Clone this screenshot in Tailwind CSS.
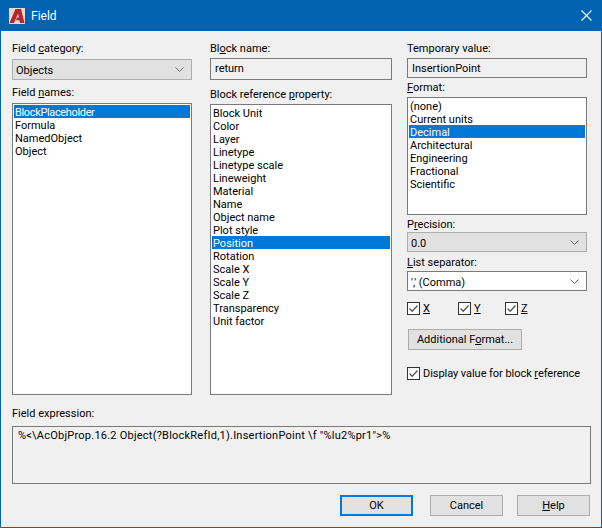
<!DOCTYPE html>
<html lang="en">
<head>
    <meta charset="UTF-8">
    <title>Field</title>
    <script src="https://cdn.jsdelivr.net/npm/@tailwindcss/browser@4"></script>
</head>
<body class="w-[602px] h-[528px] overflow-hidden bg-[#f0f0f0] font-['Roboto',sans-serif] text-[11px] leading-[13px] text-black">
<div class="w-[602px] h-[528px] flex flex-col border border-[#0063b1] border-t-0">

    <!-- title bar -->
    <div class="h-[31px] -mx-px bg-[#0063b1] flex items-center text-white shrink-0">
        <svg class="ml-[9px] w-[16px] h-[16px]" viewBox="0 0 16 16">
            <rect width="16" height="16" fill="#ecd6d2"/>
            <path d="M0.5 15 L6.5 1 H12 L15.5 15 H11 L10.4 12.2 H7 L8 9.6 H9.9 L9.1 5.5 L5 15 Z" fill="#b3262b"/>
        </svg>
        <span class="ml-[6px] mt-[2px] text-[12px]">Field</span>
        <svg class="ml-auto mr-[10px] w-[11px] h-[11px]" viewBox="0 0 11 11">
            <path d="M0.5 0.5 L10.5 10.5 M10.5 0.5 L0.5 10.5" stroke="#fff" stroke-width="1.1" fill="none"/>
        </svg>
    </div>

    <div class="flex pl-[11px] pt-[11px] h-[364px] shrink-0 whitespace-nowrap">

        <!-- left column -->
        <div class="w-[180px] flex flex-col">
            <div class="h-[13px]">Field <u>c</u>ategory:</div>
            <div class="mt-[4px] h-[21px] border border-[#adadad] bg-[#e1e1e1] flex items-center justify-between pl-[3px] pr-[7px]">
                <span class="mt-[2px]">Objects</span>
                <svg class="w-[9px] h-[5px]" viewBox="0 0 9 5"><path d="M0.5 0.5 L4.5 4.5 L8.5 0.5" stroke="#666" fill="none"/></svg>
            </div>
            <div class="mt-[6px] h-[13px]">Field <u>n</u>ames:</div>
            <div class="mt-[4px] h-[294px] border border-[#7a7a7a] bg-white p-[1px] leading-[15px]">
                <div class="h-[13px] bg-[#0078d7] text-white pl-[1px] tracking-[-0.35px]">BlockPlaceholder</div>
                <div class="h-[13px] pl-[1px]">Formula</div>
                <div class="h-[13px] pl-[1px]">NamedObject</div>
                <div class="h-[13px] pl-[1px]">Object</div>
            </div>
        </div>

        <!-- middle column -->
        <div class="ml-[18px] w-[182px] flex flex-col">
            <div class="h-[13px]">Bl<u>o</u>ck name:</div>
            <div class="mt-[3px] h-[22px] border border-[#7a7a7a] flex items-center pl-[4px]">return</div>
            <div class="mt-[8px] h-[13px]">Block reference <u>p</u>roperty:</div>
            <div class="mt-[3px] h-[293px] border border-[#7a7a7a] bg-white p-[1px] leading-[15px]">
                <div class="h-[13px] pl-[1px]">Block Unit</div>
                <div class="h-[13px] pl-[1px]">Color</div>
                <div class="h-[13px] pl-[1px]">Layer</div>
                <div class="h-[13px] pl-[1px]">Linetype</div>
                <div class="h-[13px] pl-[1px]">Linetype scale</div>
                <div class="h-[13px] pl-[1px]">Lineweight</div>
                <div class="h-[13px] pl-[1px]">Material</div>
                <div class="h-[13px] pl-[1px]">Name</div>
                <div class="h-[13px] pl-[1px]">Object name</div>
                <div class="h-[13px] pl-[1px]">Plot style</div>
                <div class="h-[13px] bg-[#0078d7] text-white pl-[1px]">Position</div>
                <div class="h-[13px] pl-[1px]">Rotation</div>
                <div class="h-[13px] pl-[1px]">Scale X</div>
                <div class="h-[13px] pl-[1px]">Scale Y</div>
                <div class="h-[13px] pl-[1px]">Scale Z</div>
                <div class="h-[13px] pl-[1px]">Transparency</div>
                <div class="h-[13px] pl-[1px]">Unit factor</div>
            </div>
        </div>

        <!-- right column -->
        <div class="ml-[15px] w-[180px] flex flex-col">
            <div class="h-[13px]">Temporary value:</div>
            <div class="mt-[3px] h-[20px] border border-[#7a7a7a] flex items-center pl-[4px]">InsertionPoint</div>
            <div class="mt-[3px] h-[13px]"><u>F</u>ormat:</div>
            <div class="mt-[3px] h-[118px] border border-[#7a7a7a] bg-white p-[1px] leading-[15px]">
                <div class="h-[13px] pl-[1px]">(none)</div>
                <div class="h-[13px] pl-[1px]">Current units</div>
                <div class="h-[13px] bg-[#0078d7] text-white pl-[1px]">Decimal</div>
                <div class="h-[13px] pl-[1px]">Architectural</div>
                <div class="h-[13px] pl-[1px]">Engineering</div>
                <div class="h-[13px] pl-[1px]">Fractional</div>
                <div class="h-[13px] pl-[1px]">Scientific</div>
            </div>
            <div class="mt-[3px] h-[13px]">P<u>r</u>ecision:</div>
            <div class="mt-[1px] h-[20px] border border-[#adadad] bg-[#e1e1e1] flex items-center justify-between pl-[3px] pr-[7px]">
                <span class="mt-[2px]">0.0</span>
                <svg class="w-[9px] h-[5px]" viewBox="0 0 9 5"><path d="M0.5 0.5 L4.5 4.5 L8.5 0.5" stroke="#666" fill="none"/></svg>
            </div>
            <div class="mt-[4px] h-[13px]"><u>L</u>ist separator:</div>
            <div class="mt-[2px] h-[20px] border border-[#7a7a7a] bg-white flex items-center justify-between pl-[3px] pr-[7px]">
                <span class="mt-[2px]">',' (Comma)</span>
                <svg class="w-[9px] h-[5px]" viewBox="0 0 9 5"><path d="M0.5 0.5 L4.5 4.5 L8.5 0.5" stroke="#666" fill="none"/></svg>
            </div>
            <div class="mt-[11px] h-[13px] flex items-center">
                <div class="w-[51px] flex items-center gap-[3px]">
                    <svg class="w-[13px] h-[13px] shrink-0" viewBox="0 0 13 13"><rect x="0.5" y="0.5" width="12" height="12" fill="#fff" stroke="#333"/><path d="M2.5 6.5 L5.2 9.2 L10.5 3.5" stroke="#555" stroke-width="1.3" fill="none"/></svg>
                    <u>X</u>
                </div>
                <div class="w-[47px] flex items-center gap-[3px]">
                    <svg class="w-[13px] h-[13px] shrink-0" viewBox="0 0 13 13"><rect x="0.5" y="0.5" width="12" height="12" fill="#fff" stroke="#333"/><path d="M2.5 6.5 L5.2 9.2 L10.5 3.5" stroke="#555" stroke-width="1.3" fill="none"/></svg>
                    <u>Y</u>
                </div>
                <div class="flex items-center gap-[3px]">
                    <svg class="w-[13px] h-[13px] shrink-0" viewBox="0 0 13 13"><rect x="0.5" y="0.5" width="12" height="12" fill="#fff" stroke="#333"/><path d="M2.5 6.5 L5.2 9.2 L10.5 3.5" stroke="#555" stroke-width="1.3" fill="none"/></svg>
                    <u>Z</u>
                </div>
            </div>
            <div class="mt-[14px] ml-[1px] w-[114px] h-[21px] border border-[#adadad] bg-[#e1e1e1] flex items-center justify-center"><span>Additional F<u>o</u>rmat...</span></div>
            <div class="mt-[17px] h-[13px] flex items-center gap-[3px]">
                <svg class="w-[13px] h-[13px] shrink-0" viewBox="0 0 13 13"><rect x="0.5" y="0.5" width="12" height="12" fill="#fff" stroke="#333"/><path d="M2.5 6.5 L5.2 9.2 L10.5 3.5" stroke="#555" stroke-width="1.3" fill="none"/></svg>
                <span class="tracking-[-0.05px]">Display value for block <u>r</u>eference</span>
            </div>
        </div>
    </div>

    <!-- field expression -->
    <div class="pl-[11px] pr-[10px] mt-[12px]">
        <div class="h-[13px]">Field expression:</div>
        <div class="mt-[6px] h-[58px] border border-[#7a7a7a] pl-[5px] pt-[2px] tracking-[0.23px]">%&lt;\AcObjProp.16.2 Object(?BlockRefId,1).InsertionPoint \f "%lu2%pr1"&gt;%</div>
    </div>

    <!-- buttons -->
    <div class="flex mt-[11px] pl-[339px]">
        <div class="w-[73px] h-[21px] border-2 border-[#0078d7] bg-[#e1e1e1] flex items-center justify-center">OK</div>
        <div class="ml-[17px] w-[73px] h-[21px] border border-[#adadad] bg-[#e1e1e1] flex items-center justify-center">Cancel</div>
        <div class="ml-[14px] w-[73px] h-[21px] border border-[#adadad] bg-[#e1e1e1] flex items-center justify-center"><span><u>H</u>elp</span></div>
    </div>
</div>
</body>
</html>
